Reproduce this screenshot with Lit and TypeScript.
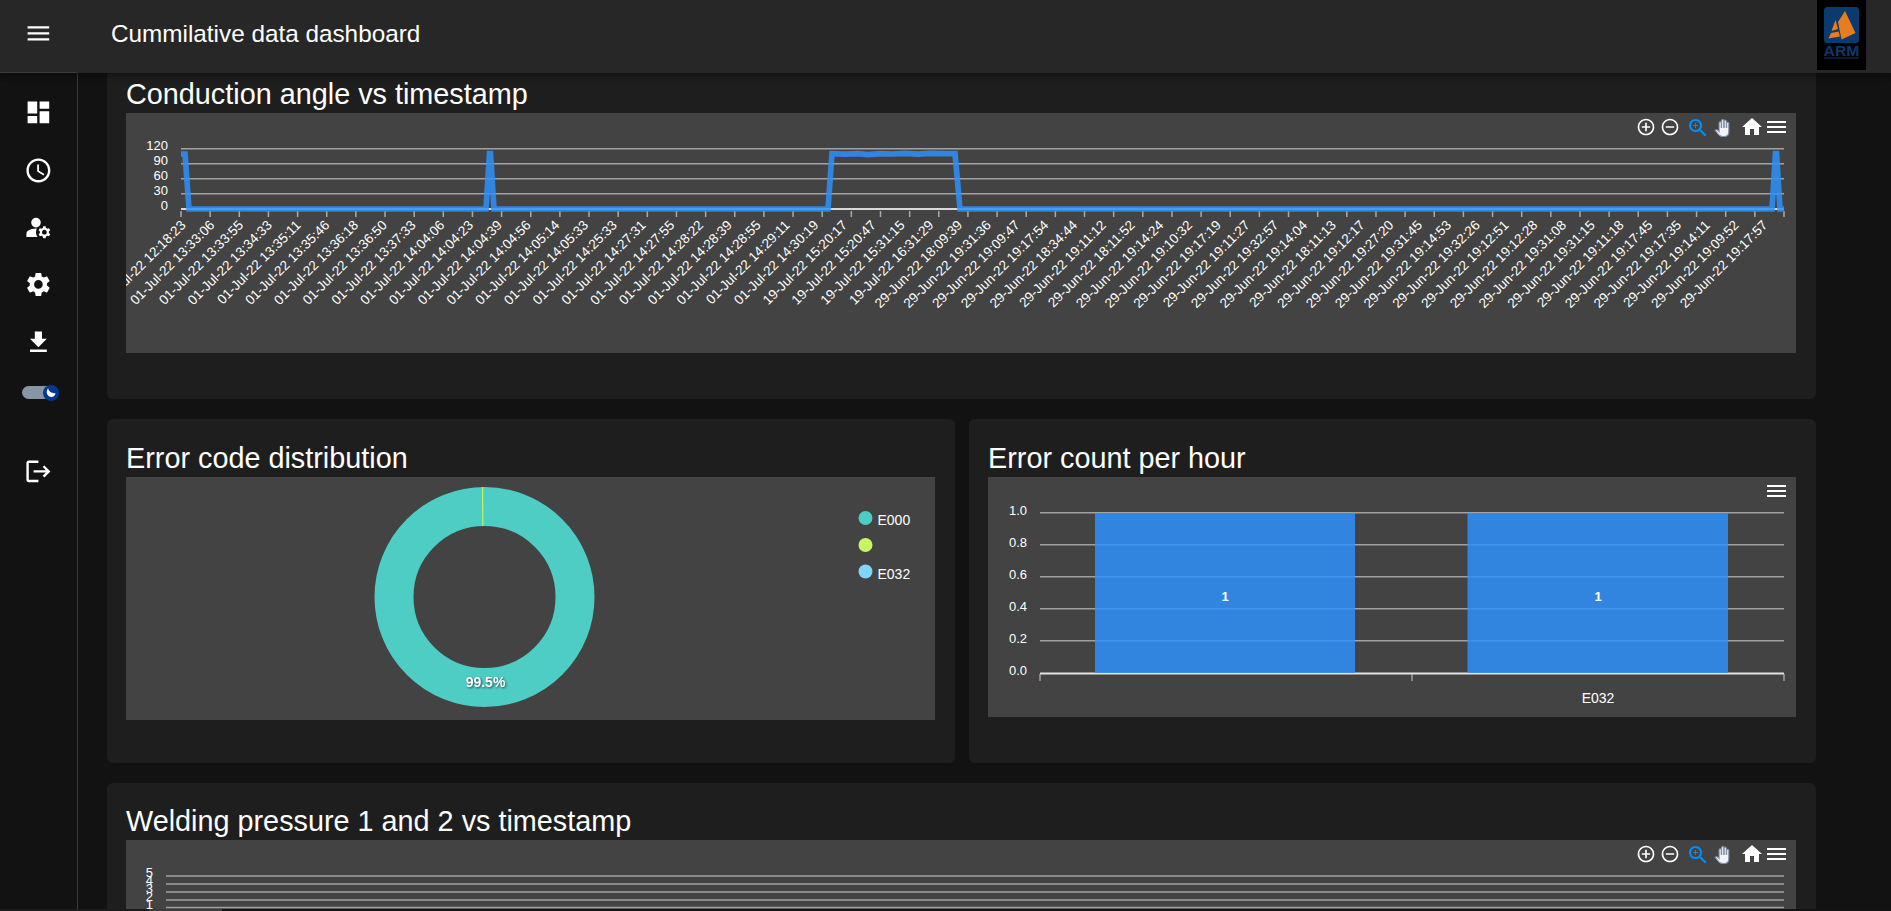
import { LitElement, html, svg, css } from "lit";
import { customElement } from "lit/decorators.js";

const T1 = ["12:18:23","13:33:06","13:33:55","13:34:33","13:35:11","13:35:46","13:36:18","13:36:50","13:37:33","14:04:06","14:04:23","14:04:39","14:04:56","14:05:14","14:05:33","14:25:33","14:27:31","14:27:55","14:28:22","14:28:39","14:28:55","14:29:11","14:30:19"].map((t) => "01-Jul-22 " + t);
const T2 = ["15:20:17","15:20:47","15:31:15","16:31:29"].map((t) => "19-Jul-22 " + t);
const T3 = ["18:09:39","19:31:36","19:09:47","19:17:54","18:34:44","19:11:12","18:11:52","19:14:24","19:10:32","19:17:19","19:11:27","19:32:57","19:14:04","18:11:13","19:12:17","19:27:20","19:31:45","19:14:53","19:32:26","19:12:51","19:12:28","19:31:08","19:31:15","19:11:18","19:17:45","19:17:35","19:14:11","19:09:52","19:17:57"].map((t) => "29-Jun-22 " + t);
const LABELS = [...T1, ...T2, ...T3];
const STEP = (1784 - 181) / 55;
const LABEL_STEP = 28.76;

const LINE = "181,154 185,154 189,209 486,209 489.5,153.7 490.5,153.7 494,209 828,209 832,153.7 845,154.2 858,153.7 868,154.6 880,153.7 892,154 905,153.3 918,154.2 930,153.3 945,153.7 955,153.7 960,209 1772,209 1775.5,153.7 1776.5,153.7 1780,209 1784,209";

const ICON = {
  menu: "M3 18h18v-2H3v2zm0-5h18v-2H3v2zm0-7v2h18V6H3z",
  dashboard: "M3 13h8V3H3v10zm0 8h8v-6H3v6zm10 0h8V11h-8v10zm0-18v6h8V3h-8z",
  schedule: "M11.99 2C6.47 2 2 6.48 2 12s4.47 10 9.99 10C17.52 22 22 17.52 22 12S17.52 2 11.99 2zM12 20c-4.42 0-8-3.58-8-8s3.58-8 8-8 8 3.58 8 8-3.58 8-8 8zm.5-13H11v6l5.25 3.15.75-1.23-4.5-2.67z",
  manage: "M10 4a4 4 0 1 0 0 8 4 4 0 0 0 0-8zM10.67 13.02c-.22-.01-.44-.02-.67-.02-2.42 0-4.68.67-6.61 1.82-.88.52-1.39 1.5-1.39 2.53V20h9.26c-.79-1.13-1.26-2.51-1.26-4 0-1.07.25-2.07.67-2.98zM20.75 16c0-.22-.03-.42-.06-.63l1.14-1.01-1-1.73-1.45.49c-.32-.27-.68-.48-1.08-.63L18 11h-2l-.3 1.49c-.4.15-.76.36-1.08.63l-1.45-.49-1 1.73 1.14 1.01c-.03.21-.06.41-.06.63s.03.42.06.63l-1.14 1.01 1 1.73 1.45-.49c.32.27.68.48 1.08.63L16 21h2l.3-1.49c.4-.15.76-.36 1.08-.63l1.45.49 1-1.73-1.14-1.01c.03-.21.06-.41.06-.63zM17 18c-1.1 0-2-.9-2-2s.9-2 2-2 2 .9 2 2-.9 2-2 2z",
  settings: "M19.14 12.94c.04-.3.06-.61.06-.94 0-.32-.02-.64-.07-.94l2.03-1.58c.18-.14.23-.41.12-.61l-1.92-3.32c-.12-.22-.37-.29-.59-.22l-2.39.96c-.5-.38-1.03-.7-1.62-.94l-.36-2.54c-.04-.24-.24-.41-.48-.41h-3.84c-.24 0-.43.17-.47.41l-.36 2.54c-.59.24-1.13.57-1.62.94l-2.39-.96c-.22-.08-.47 0-.59.22L2.74 8.87c-.12.21-.08.47.12.61l2.03 1.58c-.05.3-.09.63-.09.94s.02.64.07.94l-2.03 1.58c-.18.14-.23.41-.12.61l1.92 3.32c.12.22.37.29.59.22l2.39-.96c.5.38 1.03.7 1.62.94l.36 2.54c.05.24.24.41.48.41h3.84c.24 0 .44-.17.47-.41l.36-2.54c.59-.24 1.13-.56 1.62-.94l2.39.96c.22.08.47 0 .59-.22l1.92-3.32c.12-.22.07-.47-.12-.61l-2.01-1.58zM12 15.6c-1.98 0-3.6-1.62-3.6-3.6s1.62-3.6 3.6-3.6 3.6 1.62 3.6 3.6-1.62 3.6-3.6 3.6z",
  download: "M19 9h-4V3H9v6H5l7 7 7-7zM5 18v2h14v-2H5z",
  logout: "M17 7l-1.41 1.41L18.17 11H8v2h10.17l-2.58 2.58L17 17l5-5zM4 5h8V3H4c-1.1 0-2 .9-2 2v14c0 1.1.9 2 2 2h8v-2H4V5z",
  zoomIn: "M13 7h-2v4H7v2h4v4h2v-4h4v-2h-4V7zm-1-5C6.48 2 2 6.48 2 12s4.48 10 10 10 10-4.48 10-10S17.52 2 12 2zm0 18c-4.41 0-8-3.59-8-8s3.59-8 8-8 8 3.59 8 8-3.59 8-8 8z",
  zoomOut: "M7 11v2h10v-2H7zm5-9C6.48 2 2 6.48 2 12s4.48 10 10 10 10-4.48 10-10S17.52 2 12 2zm0 18c-4.41 0-8-3.59-8-8s3.59-8 8-8 8 3.59 8 8-3.59 8-8 8z",
  zoom: "M15.5 14h-.79l-.28-.27C15.41 12.59 16 11.11 16 9.5 16 5.91 13.09 3 9.5 3S3 5.91 3 9.5 5.91 16 9.5 16c1.61 0 3.09-.59 4.23-1.57l.27.28v.79l5 4.99L20.49 19l-4.99-5zm-6 0C7.01 14 5 11.99 5 9.5S7.01 5 9.5 5 14 7.01 14 9.5 11.99 14 9.5 14zM12 10h-2v2H9v-2H7V9h2V7h1v2h2v1z",
  home: "M10 20v-6h4v6h5v-8h3L12 3 2 12h3v8z",
  hand: "M1 11.6c1-1 2.3-.5 3.2.6l.6.7V4.6a1 1 0 0 1 2 0V9h.4V2.4a1 1 0 0 1 2 0V9h.4V3a1 1 0 0 1 2 0V9h.4V5a1 1 0 0 1 2 0v8c0 3-2 4.6-4.6 4.6H8c-2.6 0-3.6-1.6-4.6-3.1z",
};

function toolbarMenu(y: number) {
  return svg`<path class="ic-white" d="M1767 ${y - 6}h19v2h-19zM1767 ${y - 1}h19v2h-19zM1767 ${y + 4}h19v2h-19z" />`;
}

function toolbar(y: number) {
  return svg`
    <svg x="1636" y=${y - 10} width="20" height="20" viewBox="0 0 24 24"><path class="ic-white" d=${ICON.zoomIn} /></svg>
    <svg x="1660" y=${y - 10} width="20" height="20" viewBox="0 0 24 24"><path class="ic-white" d=${ICON.zoomOut} /></svg>
    <svg x="1686" y=${y - 11} width="24" height="24" viewBox="0 0 24 24"><path class="ic-blue" d=${ICON.zoom} /></svg>
    <svg x="1714" y=${y - 9} width="18" height="19" viewBox="0 0 17 18"><path class="ic-hand" d=${ICON.hand} /></svg>
    <svg x="1740" y=${y - 12} width="24" height="24" viewBox="0 0 24 24"><path class="ic-white" d=${ICON.home} /></svg>
    ${toolbarMenu(y)}
  `;
}

function grid(x1: number, x2: number, ys: number[]) {
  return ys.map((y) => svg`<line class="grid" x1=${x1} x2=${x2} y1=${y} y2=${y} />`);
}

function conductionChart() {
  return html`<svg class="chart c1" width="1670" height="240" viewBox="126 113 1670 240">
    ${toolbar(127)}
    ${grid(181, 1784, [148.7, 163.7, 178.7, 193.7])}
    <line class="axis" x1="181" x2="1784" y1="209" y2="209" />
    ${[["120", 150], ["90", 165], ["60", 180], ["30", 195], ["0", 210]].map(
      ([t, y]) => svg`<text class="lbl" text-anchor="end" x="168" y=${y}>${t}</text>`
    )}
    ${LABELS.map((t, i) => {
      const tx = 181 + i * STEP;
      const ax = 186.5 + i * LABEL_STEP;
      return svg`<line class="tick" x1=${tx} x2=${tx} y1="211" y2="217" />
        <text class="rot" text-anchor="end" x=${ax} y="226" transform="rotate(-45 ${ax} 226)">${t}</text>`;
    })}
    <polyline class="series" points=${LINE} />
  </svg>`;
}

function pieChart() {
  const cx = 484.5, cy = 597;
  return html`<svg class="chart c2" width="809" height="243" viewBox="126 477 809 243">
    <circle class="donut" cx=${cx} cy=${cy} r="90.5" />
    <line class="slice-a" x1="482.4" x2="482.8" y1="487" y2="526" />
    <line class="slice-b" x1="483.4" x2="483.6" y1="487" y2="526" />
    <text class="pct" text-anchor="middle" x="485.5" y="687">99.5%</text>
    <circle class="lg1" cx="865.5" cy="518" r="7" />
    <text class="lg" x="877.5" y="524.5">E000</text>
    <circle class="lg2" cx="865.5" cy="545" r="7" />
    <circle class="lg3" cx="865.5" cy="571.5" r="7" />
    <text class="lg" x="877.5" y="578.5">E032</text>
  </svg>`;
}

function barChart() {
  return html`<svg class="chart c3" width="808" height="240" viewBox="988 477 808 240">
    ${toolbarMenu(491)}
    ${grid(1040, 1784, [512.7, 544.7, 576.7, 608.7, 640.7])}
    ${[["1.0", 514.5], ["0.8", 546.5], ["0.6", 579], ["0.4", 610.5], ["0.2", 642.5], ["0.0", 674.5]].map(
      ([t, y]) => svg`<text class="lbl" text-anchor="end" x="1027" y=${y}>${t}</text>`
    )}
    <line class="axis strong" x1="1040" x2="1784" y1="673.5" y2="673.5" />
    ${[1040, 1412, 1784].map((x) => svg`<line class="tick thin" x1=${x} x2=${x} y1="674" y2="681" />`)}
    <rect class="bar" x="1095" y="513" width="260" height="160" />
    <rect class="bar" x="1467.5" y="513" width="260.5" height="160" />
    <text class="val" text-anchor="middle" x="1225" y="601">1</text>
    <text class="val" text-anchor="middle" x="1598" y="601">1</text>
    <text class="lg" text-anchor="middle" x="1598" y="703">E032</text>
  </svg>`;
}

function pressureChart() {
  return html`<svg class="chart c4" width="1670" height="240" viewBox="126 841 1670 240">
    ${toolbar(855)}
    ${grid(166, 1784, [877, 885, 893, 901, 908.5])}
    ${[["5", 877.5], ["4", 885.5], ["3", 893.5], ["2", 901.5], ["1", 909.5]].map(
      ([t, y]) => svg`<text class="lbl" text-anchor="end" x="153" y=${y}>${t}</text>`
    )}
  </svg>`;
}

const NAV = [ICON.dashboard, ICON.schedule, ICON.manage, ICON.settings, ICON.download];

@customElement("app-root")
export class AppRoot extends LitElement {
  static styles = css`
    :host {
      display: grid;
      grid-template-columns: 78px 1fr;
      grid-template-rows: 73px 836px 2px;
      height: 911px;
      overflow: hidden;
      background: #121212;
      color: #fff;
      font-family: "Liberation Sans", Arial, sans-serif;
    }
    .appbar {
      grid-column: 1 / 3;
      display: flex;
      background: #272727;
      position: relative;
      z-index: 2;
      box-shadow: 0 2px 4px -1px rgba(0, 0, 0, 0.2), 0 4px 5px rgba(0, 0, 0, 0.14), 0 1px 10px rgba(0, 0, 0, 0.12);
    }
    .burger {
      width: 77px;
      height: 73px;
      box-sizing: border-box;
      border-bottom: 1px solid #3d3d3d;
      display: flex;
      align-items: center;
      justify-content: center;
      padding-bottom: 5px;
    }
    .app-title {
      flex: 1;
      padding-left: 34px;
      font-size: 24.3px;
      line-height: 68px;
    }
    .logo {
      width: 49px;
      height: 70px;
      margin-right: 25px;
      background: #000;
      display: block;
    }
    .logo-box { fill: #0a3a6e; }
    .logo-mark { fill: #e87d1e; }
    .logo-text {
      fill: #0a3a6e;
      font-size: 15.5px;
      font-weight: 700;
      font-family: "Liberation Sans", Arial, sans-serif;
    }
    .sidebar {
      border-right: 1px solid #3a3a3a;
      background: #121212;
      padding-top: 11px;
      display: flex;
      flex-direction: column;
      align-items: center;
    }
    .nav-item {
      height: 57.4px;
      width: 100%;
      display: flex;
      align-items: center;
      justify-content: center;
    }
    .ico { width: 28.8px; height: 28.8px; fill: #fff; display: block; }
    .toggle-row {
      height: 44px;
      display: flex;
      align-items: center;
      margin-bottom: 28px;
    }
    .toggle {
      width: 34px;
      height: 13px;
      background: #8796a5;
      border-radius: 7px;
      display: flex;
      align-items: center;
      justify-content: flex-end;
    }
    .thumb { width: 16px; height: 16px; display: block; margin-right: -3px; }
    .thumb-bg { fill: #003892; }
    .thumb-moon { fill: #fff; }
    .main { overflow: hidden; padding: 0 75px 0 29px; }
    .content {
      margin-top: -17px;
      display: grid;
      grid-template-columns: 1fr 1fr;
      column-gap: 14px;
      row-gap: 20px;
    }
    .card {
      background: #1e1e1e;
      border-radius: 6px;
      padding: 0 20px 0 19px;
      min-width: 0;
    }
    .wide { grid-column: 1 / 3; }
    .row-card { height: 344px; }
    .top-card { height: 343px; }
    .card-title {
      height: 57px;
      box-sizing: border-box;
      padding-top: 20px;
      font-size: 28.8px;
      line-height: 36px;
      white-space: nowrap;
    }
    .row-card .card-title { height: 58px; padding-top: 21px; }
    .right { padding-left: 19.5px; }
    .chart {
      display: block;
      background: #434343;
      font-family: "Liberation Sans", Arial, sans-serif;
    }
    .grid { stroke: #a1a1a1; stroke-width: 1.6; }
    .axis { stroke: #d8d8d8; stroke-width: 2; }
    .axis.strong { stroke: #e3e3e3; stroke-width: 2; }
    .tick { stroke: #aaa; stroke-width: 1.5; }
    .tick.thin { stroke: #ccc; stroke-width: 1; }
    .lbl { fill: #fff; font-size: 13px; }
    .rot { fill: #fff; font-size: 13.5px; }
    .lg { fill: #fff; font-size: 14px; }
    .val { fill: #fff; font-size: 13px; font-weight: 700; }
    .series { fill: none; stroke: #2e90fa; stroke-width: 5.7; opacity: 0.85; stroke-linejoin: miter; }
    .bar { fill: #2e90fa; opacity: 0.85; }
    .donut { fill: none; stroke: #4ecdc4; stroke-width: 39; }
    .slice-a { stroke: #c7f464; stroke-width: 1; }
    .slice-b { stroke: #81d4fa; stroke-width: 0.6; opacity: 0.6; }
    .pct { fill: #fff; font-size: 14px; font-weight: 700; filter: drop-shadow(1px 1px 1px rgba(0, 0, 0, 0.6)); }
    .lg1 { fill: #4ecdc4; }
    .lg2 { fill: #c7f464; }
    .lg3 { fill: #81d4fa; }
    .ic-white { fill: #fff; }
    .ic-blue { fill: #008ffb; }
    .ic-hand { fill: #f2f4f7; stroke: #7f92a8; stroke-width: 1; }
    .scrollbar { grid-column: 1 / 3; display: flex; }
    .sb-track-a { width: 149px; background: #1b1b1b; }
    .sb-thumb { width: 73px; background: #3b3b3b; }
    .sb-track-b { flex: 1; background: #141414; }
  `;

  render() {
    return html`
      <header class="appbar">
        <div class="burger"><svg class="ico" viewBox="0 0 24 24"><path d=${ICON.menu} /></svg></div>
        <div class="app-title">Cummilative data dashboard</div>
        <svg class="logo" viewBox="1817 0 49 70">
          <rect class="logo-box" x="1824" y="7" width="35" height="36" rx="3.5" />
          <path class="logo-mark" d="M1845 11L1855.5 33L1841.5 39.5L1838 22zM1835.5 20L1838 29L1831.5 31zM1831 33L1838.5 31.5L1840 36.5L1828.5 38.5z" />
          <text class="logo-text" x="1823.5" y="56" textLength="36" lengthAdjust="spacingAndGlyphs">ARM</text>
          <rect class="logo-box" x="1824" y="57.5" width="35" height="1" />
        </svg>
      </header>
      <nav class="sidebar">
        ${NAV.map((d) => html`<div class="nav-item"><svg class="ico" viewBox="0 0 24 24"><path d=${d} /></svg></div>`)}
        <div class="toggle-row">
          <div class="toggle">
            <svg class="thumb" viewBox="0 0 16 16">
              <circle class="thumb-bg" cx="8" cy="8" r="8" />
              <path class="thumb-moon" d="M5.2 3.2c.3 2.8 2.6 5 7.3 5-.2 2.4-2.200 4-4.500 3.800C5.600 11.800 3.600 9.600 3.700 7.100 3.800 5.600 4.300 4.200 5.200 3.200z" />
            </svg>
          </div>
        </div>
        <div class="nav-item"><svg class="ico" viewBox="0 0 24 24"><path d=${ICON.logout} /></svg></div>
      </nav>
      <main class="main">
        <div class="content">
          <section class="card wide top-card">
            <div class="card-title">Conduction angle vs timestamp</div>
            ${conductionChart()}
          </section>
          <section class="card row-card">
            <div class="card-title">Error code distribution</div>
            ${pieChart()}
          </section>
          <section class="card row-card right">
            <div class="card-title">Error count per hour</div>
            ${barChart()}
          </section>
          <section class="card wide">
            <div class="card-title">Welding pressure 1 and 2 vs timestamp</div>
            ${pressureChart()}
          </section>
        </div>
      </main>
      <div class="scrollbar"><div class="sb-track-a"></div><div class="sb-thumb"></div><div class="sb-track-b"></div></div>
    `;
  }
}
